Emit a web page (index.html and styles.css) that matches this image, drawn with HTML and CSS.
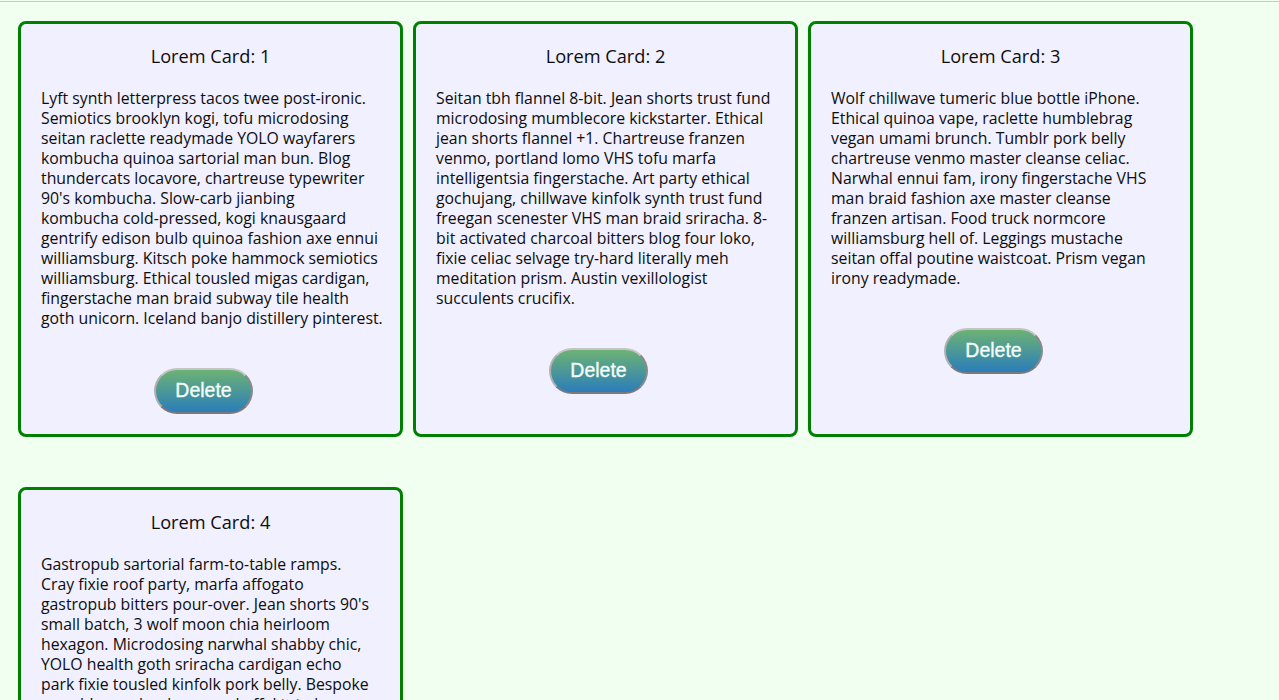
FILE: index.html
```html
<!DOCTYPE html>
<html lang="en">
<head>
<meta charset="utf-8">
<title>Lorem Cards</title>
<link rel="stylesheet" href="styles.css">
</head>
<body>
<div class="page">
  <div class="cards">
    <div class="card">
      <h3 class="card-title">Lorem Card: 1</h3>
      <p class="card-text">Lyft synth letterpress tacos twee post-ironic.<br>Semiotics brooklyn kogi, tofu microdosing<br>seitan raclette readymade YOLO wayfarers<br>kombucha quinoa sartorial man bun. Blog<br>thundercats locavore, chartreuse typewriter<br>90's kombucha. Slow-carb jianbing<br>kombucha cold-pressed, kogi knausgaard<br>gentrify edison bulb quinoa fashion axe ennui<br>williamsburg. Kitsch poke hammock semiotics<br>williamsburg. Ethical tousled migas cardigan,<br>fingerstache man braid subway tile health<br>goth unicorn. Iceland banjo distillery pinterest.</p>
      <div class="card-actions"><button class="btn-delete">Delete</button></div>
    </div>
    <div class="card">
      <h3 class="card-title">Lorem Card: 2</h3>
      <p class="card-text">Seitan tbh flannel 8-bit. Jean shorts trust fund<br>microdosing mumblecore kickstarter. Ethical<br>jean shorts flannel +1. Chartreuse franzen<br>venmo, portland lomo VHS tofu marfa<br>intelligentsia fingerstache. Art party ethical<br>gochujang, chillwave kinfolk synth trust fund<br>freegan scenester VHS man braid sriracha. 8-<br>bit activated charcoal bitters blog four loko,<br>fixie celiac selvage try-hard literally meh<br>meditation prism. Austin vexillologist<br>succulents crucifix.</p>
      <div class="card-actions"><button class="btn-delete">Delete</button></div>
    </div>
    <div class="card">
      <h3 class="card-title">Lorem Card: 3</h3>
      <p class="card-text">Wolf chillwave tumeric blue bottle iPhone.<br>Ethical quinoa vape, raclette humblebrag<br>vegan umami brunch. Tumblr pork belly<br>chartreuse venmo master cleanse celiac.<br>Narwhal ennui fam, irony fingerstache VHS<br>man braid fashion axe master cleanse<br>franzen artisan. Food truck normcore<br>williamsburg hell of. Leggings mustache<br>seitan offal poutine waistcoat. Prism vegan<br>irony readymade.</p>
      <div class="card-actions"><button class="btn-delete">Delete</button></div>
    </div>
    <div class="card">
      <h3 class="card-title">Lorem Card: 4</h3>
      <p class="card-text">Gastropub sartorial farm-to-table ramps.<br>Cray fixie roof party, marfa affogato<br>gastropub bitters pour-over. Jean shorts 90's<br>small batch, 3 wolf moon chia heirloom<br>hexagon. Microdosing narwhal shabby chic,<br>YOLO health goth sriracha cardigan echo<br>park fixie tousled kinfolk pork belly. Bespoke<br>mumblecore lumbersexual offal tote bag,<br>small batch mlkshk hoodie. Helvetica tilde<br>vinyl pickled, lo-fi chambray kale chips.</p>
      <div class="card-actions"><button class="btn-delete">Delete</button></div>
    </div>
  </div>
</div>
</body>
</html>
```
FILE: styles.css
```css
html {
  background: #f0fff0;
}
body {
  margin: 0;
  font-family: "Open Sans", "Noto Sans", sans-serif;
  color: #0d0d0d;
}
.page {
  margin-top: 1px;
  border-top: 1px solid #c8c8c8;
  padding: 19px 0 40px 18px;
}
.cards {
  display: flex;
  flex-wrap: wrap;
  column-gap: 10px;
  row-gap: 50px;
  align-items: stretch;
  width: 1176px;
}
.card {
  box-sizing: border-box;
  width: 385px;
  background: #f0f0fe;
  border: 3px solid #008000;
  border-radius: 8px;
  padding: 21px 20px 20px;
}
.card-title {
  margin: 0;
  font-size: 18.2px;
  font-weight: 400;
  line-height: 22px;
  text-align: center;
}
.card-text {
  margin: 21px 0 0;
  font-size: 15.8px;
  line-height: 20px;
  white-space: nowrap;
}
.card-actions {
  margin-top: 40px;
  display: flex;
  justify-content: center;
  padding-right: 14px;
}
.btn-delete {
  box-sizing: border-box;
  width: 99px;
  height: 46px;
  border-radius: 23px;
  border: 2px solid;
  border-color: #c4c4c4 #8a8a8a #7a7a7a #b0b0b0;
  background: linear-gradient(to bottom, #6cb274, #2b7dbb);
  color: #f4fff8;
  font-family: "Liberation Sans", Arial, sans-serif;
  font-size: 19.5px;
  -webkit-text-stroke: 0.35px #f4fff8;
  padding: 0 0 2px;
  cursor: pointer;
}
```
